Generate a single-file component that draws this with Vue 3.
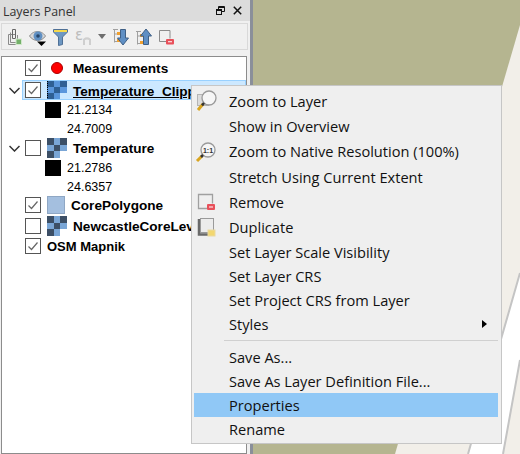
<script setup>
const rows = [
  { type: 'layer', name: 'Measurements', checked: true, icon: 'dot', cls: 'gap' },
  { type: 'layer', name: 'Temperature_Clipped', checked: true, icon: 'raster', open: true, selected: true },
  { type: 'value', text: '21.2134', swatch: true },
  { type: 'value', text: '24.7009' },
  { type: 'layer', name: 'Temperature', checked: false, icon: 'raster', open: true },
  { type: 'value', text: '21.2786', swatch: true },
  { type: 'value', text: '24.6357' },
  { type: 'layer', name: 'CorePolygone', checked: true, icon: 'poly', cls: 'short' },
  { type: 'layer', name: 'NewcastleCoreLevel', checked: false, icon: 'raster' },
  { type: 'layer', name: 'OSM Mapnik', checked: true }
]

// 3x3 raster thumbnail, 0 dark / 1 mid / 2 empty
const cells = [0, 1, 0, 1, 0, 1, 0, 1, 2]

const menu = [
  { label: 'Zoom to Layer', icon: 'zoom', tall: true },
  { label: 'Show in Overview', tall: true },
  { label: 'Zoom to Native Resolution (100%)', icon: 'native', tall: true },
  { label: 'Stretch Using Current Extent', tall: true },
  { label: 'Remove', icon: 'remove', tall: true },
  { label: 'Duplicate', icon: 'duplicate', tall: true },
  { label: 'Set Layer Scale Visibility' },
  { label: 'Set Layer CRS' },
  { label: 'Set Project CRS from Layer' },
  { label: 'Styles', sub: true },
  { sep: true },
  { label: 'Save As...' },
  { label: 'Save As Layer Definition File...' },
  { label: 'Properties', active: true },
  { label: 'Rename' }
]
</script>

<template>
  <div class="app">
    <aside class="panel">
      <header class="title">
        <span class="title-text">Layers Panel</span>
        <span class="title-btns">
          <svg width="9" height="9" viewBox="0 0 9 9" fill="none" stroke="#111"><rect x=".5" y="3.500" width="5" height="5"/><path d="M2.500 3V.5h6v5H6M2.500 1.500h6M.5 4.500h5"/></svg>
          <svg width="9" height="9" viewBox="0 0 9 9" fill="none" stroke="#111" stroke-width="1.500"><path d="M.8 .8l7.400 7.400M8.200 .8L.8 8.200"/></svg>
        </span>
      </header>

      <div class="toolbar">
        <svg width="15" height="18" viewBox="0 0 15 18" fill="none" stroke="#8a8a8a">
          <path d="M1.500 6.500h7M1.500 6.500v10h8"/>
          <path d="M3.500 4.500v10h7V7"/>
          <path d="M5.500 1.500h3v9h-3z" stroke="#666"/>
          <rect x="9" y="11" width="5.500" height="5.500" fill="#74b06a" stroke="#d2e8cc"/>
        </svg>
        <svg width="17" height="18" viewBox="0 0 17 18">
          <path d="M.5 8C3 4.500 6 3.500 8.500 3.500S14 4.500 16.500 8c-2 3-5 4.500-8 4.500S2.500 11 .5 8z" fill="#d8d8d8" stroke="#8b8b8b"/>
          <circle cx="9" cy="8" r="4.500" fill="#5f8fc2"/>
          <circle cx="9" cy="8" r="1.800" fill="#27466a"/>
          <path d="M8 13.500h9l-4.500 4.500z" fill="#000"/>
        </svg>
        <svg width="15" height="18" viewBox="0 0 15 18">
          <path d="M.5 1.500h14v2.500L9.500 9v7.500l-4 1V9L.5 4z" fill="#6d97c2" stroke="#4f7096"/>
          <rect x="1" y="2" width="13" height="2" fill="#f5d94c"/>
        </svg>
        <svg class="eps-icon" width="16" height="18" viewBox="0 0 16 18">
          <text x="0" y="12" class="eps">ε</text>
          <path d="M9 11v6M15 11v6M9 11.500c2-1.500 4-1.500 6 0" fill="none" stroke="#cfcfcf" stroke-width="2"/>
        </svg>
        <span class="caret"></span>
        <svg width="16" height="18" viewBox="0 0 16 18">
          <path d="M0 1.500h5M1.500 1.500v13M1.500 6h3M1.500 13.500h3" stroke="#a0a0a0" fill="none"/>
          <rect x="4" y="4" width="3" height="3" fill="#f0a030"/>
          <rect x="4" y="11" width="3" height="3" fill="#f0a030"/>
          <path d="M7.500 1.500h5v8.500h3L10 17 4.500 10h3z" fill="#5f8fc4" stroke="#3e5f85"/>
        </svg>
        <svg width="16" height="18" viewBox="0 0 16 18">
          <path d="M0 3.500h5M1.500 3.500v13M1.500 8h3M1.500 15.500h3" stroke="#a0a0a0" fill="none"/>
          <rect x="4" y="6" width="3" height="3" fill="#f0a030"/>
          <rect x="4" y="13" width="3" height="3" fill="#f0a030"/>
          <path d="M7.500 16.500h5V8h3L10 1 4.500 8h3z" fill="#5f8fc4" stroke="#3e5f85"/>
        </svg>
        <svg width="15" height="18" viewBox="0 0 15 18" fill="none">
          <path d="M7 13.500H.5V2.500h10.500v8" stroke="#8c8c8c"/>
          <rect x="7" y="11" width="8" height="5.500" rx="1" fill="#e8505a"/>
          <path d="M9 13.750h4" stroke="#fff"/>
        </svg>
      </div>

      <div class="tree">
        <div v-for="r in rows" :key="r.name || r.text" class="row" :class="[r.cls, { value: r.type === 'value', selected: r.selected }]">
          <template v-if="r.type === 'layer'">
            <span class="arrow">
              <svg v-if="r.open" width="11" height="7" viewBox="0 0 11 7" fill="none" stroke="#333" stroke-width="1.500"><path d="M.5 1l5 5 5-5"/></svg>
            </span>
            <span class="check">
              <svg v-if="r.checked" width="14" height="14" viewBox="0 0 14 14" fill="none" stroke="#666" stroke-width="1.200"><path d="M2.500 7.500L5.500 10.500 11.500 3.500"/></svg>
            </span>
            <span class="label-wrap" :class="{ focus: r.selected }">
              <span v-if="r.icon === 'dot'" class="icon"><span class="dot"></span></span>
              <span v-else-if="r.icon === 'raster'" class="icon raster">
                <i v-for="(c, idx) in cells" :key="idx" :class="'c' + c"></i>
              </span>
              <span v-else-if="r.icon === 'poly'" class="icon poly"></span>
              <span class="name" :class="{ plain: !r.icon, under: r.selected }">{{ r.name }}</span>
            </span>
          </template>
          <template v-else>
            <span class="swatch" :class="{ on: r.swatch }"></span>
            <span class="val">{{ r.text }}</span>
          </template>
        </div>
      </div>
    </aside>

    <main class="map">
      <svg class="map-art" width="267" height="454" viewBox="0 0 267 454">
        <path d="M0 0H267V25L142 454H0z" fill="#b5b590"/>
        <path d="M215 454L267 273V360L250 454z" fill="#fff"/>
        <path d="M215 454L267 273M250 454L267 360" stroke="#c4c4c4" stroke-width="2" fill="none"/>
      </svg>
    </main>

    <ul class="menu">
      <template v-for="m in menu" :key="m.label || 'sep'">
        <li v-if="m.sep" class="sep"></li>
        <li v-else class="item" :class="{ tall: m.tall, active: m.active }">
          <span class="mi">
            <svg v-if="m.icon === 'zoom'" width="24" height="24" viewBox="0 0 24 24">
              <rect x="2.500" y="4.500" width="11" height="11" fill="#dcdcdc" stroke="#b5b5b5"/>
              <circle cx="14" cy="8" r="7" fill="#f6f6f6" stroke="#9a9a9a" stroke-width="1.300"/>
              <path d="M8 14L3 20" stroke="#d9a520" stroke-width="3"/>
              <path d="M9 13l-2 2.400" stroke="#333" stroke-width="2.500"/>
            </svg>
            <svg v-else-if="m.icon === 'native'" width="24" height="24" viewBox="0 0 24 24">
              <circle cx="13" cy="10" r="7" fill="#f6f6f6" stroke="#9a9a9a" stroke-width="1.300"/>
              <path d="M7 16L2 21" stroke="#d9a520" stroke-width="3"/>
              <path d="M8 15l-2 2" stroke="#333" stroke-width="2.500"/>
              <text x="13" y="13" text-anchor="middle" class="one">1:1</text>
            </svg>
            <svg v-else-if="m.icon === 'remove'" width="24" height="24" viewBox="0 0 24 24" fill="none">
              <path d="M12 17.500H3.500V3.500h14v9" stroke="#a0a0a0" stroke-width="1.300"/>
              <rect x="12" y="13" width="8" height="6" rx="1" fill="#e8505a"/>
              <path d="M14 16h4" stroke="#fff"/>
            </svg>
            <svg v-else-if="m.icon === 'duplicate'" width="24" height="24" viewBox="0 0 24 24">
              <path d="M4 3v15.500h14" fill="none" stroke="#6a6a6a" stroke-width="2.500"/>
              <rect x="5.500" y="2.500" width="13" height="14" fill="#ececec" stroke="#9a9a9a"/>
              <rect x="13" y="14" width="7" height="6" fill="#f2d770" stroke="#ead9a0"/>
            </svg>
          </span>
          <span class="mt">{{ m.label }}</span>
          <span v-if="m.sub" class="sub"></span>
        </li>
      </template>
    </ul>
  </div>
</template>

<style scoped>
.app {
  position: relative;
  display: flex;
  width: 520px;
  height: 454px;
  overflow: hidden;
  background: #f2efe9;
  font-family: "Open Sans", sans-serif;
}
.panel {
  width: 250px;
  flex: none;
  display: flex;
  flex-direction: column;
  background: #f0f0f0;
  border-right: 3px solid #8a8f9a;
  box-sizing: content-box;
}
.title {
  height: 21px;
  background: #dcdcdc;
  display: flex;
  align-items: center;
  justify-content: space-between;
  padding: 0 8px 0 3px;
  font-size: 12.400px;
  color: #333;
}
.title-text { padding-top: 2px; }
.title-btns { display: flex; gap: 8px; }
.toolbar {
  height: 25px;
  margin: 2px 2px 6px 1px;
  border: 1px solid #d9d9d9;
  display: flex;
  align-items: center;
  padding-left: 5px;
  gap: 7px;
}
.toolbar svg { flex: none; }
.eps-icon { overflow: visible; }
.eps { font: 400 15px "DejaVu Sans", sans-serif; fill: #bdbdbd; }
.caret {
  width: 0; height: 0; flex: none;
  border-left: 4.500px solid transparent;
  border-right: 4.500px solid transparent;
  border-top: 5px solid #6e6e6e;
}
.tree {
  flex: 1;
  margin: 0 3px 0 1px;
  border: 1px solid #8c8c8c;
  background: #fff;
  padding-top: 1px;
  font-family: "Liberation Sans", sans-serif;
  font-size: 12.500px;
  color: #000;
}
.row {
  height: 20px;
  display: flex;
  align-items: center;
}
.row.gap { margin-bottom: 2px; }
.row.short { height: 18px; margin-bottom: 2px; }
.row.value { height: 19px; padding-left: 43px; }
.selected {
  background: #cce8ff;
  outline: 1px solid #99d1ff;
  outline-offset: -1px;
  margin-left: 20px;
}
.selected .arrow { margin-left: -20px; }
.arrow { width: 23px; display: flex; justify-content: center; flex: none; padding-left: 2px; box-sizing: border-box; }
.check {
  width: 16px; height: 16px; flex: none;
  border: 1px solid #555; background: #fff;
  display: flex; align-items: center; justify-content: center;
  box-sizing: border-box;
}
.label-wrap { display: flex; align-items: center; flex: 1; height: 100%; margin-left: 6px; min-width: 0; }
.focus { outline: 1px dotted #000; outline-offset: -1px; }
.icon { width: 20px; height: 20px; flex: none; display: flex; align-items: center; justify-content: center; }
.dot { width: 10px; height: 10px; border-radius: 50%; background: #f00; border: 1px solid #a00; }
.raster { display: grid; grid-template-columns: repeat(3, 1fr); grid-template-rows: repeat(3, 1fr); }
.raster i { display: block; width: 100%; height: 100%; }
.c0 { background: #3c4f66; }
.c1 { background: #7aa6d6; }
.selected .c0 { background: #2f5f94; }
.selected .c1 { background: #5a96dc; }
.poly { width: 18px; height: 18px; background: #a4bfdf; border: 1px solid #8fa7c4; box-sizing: border-box; }
.name { font-weight: 700; margin-left: 6px; white-space: nowrap; font-size: 13.600px; }
.name.plain { margin-left: 0; font-size: 13px; }
.name.under { text-decoration: underline; padding-top: 2px; }
.swatch { width: 16px; height: 16px; flex: none; }
.swatch.on { background: #000; }
.val { margin-left: 6px; }

.map { flex: 1; min-width: 0; position: relative; }
.map-art { position: absolute; left: 0; top: 0; }

.menu {
  position: absolute;
  left: 191px;
  top: 85px;
  width: 311px;
  height: 359px;
  box-sizing: border-box;
  margin: 0;
  padding: 3px 3px 0 2px;
  list-style: none;
  background: #efefef;
  border: 1px solid #c6c6c6;
  font-size: 14.600px;
  color: #111;
}
.item { height: 24px; display: flex; align-items: center; position: relative; }
.item.tall { height: 25.330px; }
.item.active { background: #90c8f6; }
.mi { width: 29px; flex: none; padding-left: 1px; box-sizing: border-box; display: flex; }
.mt { margin-left: 6px; white-space: nowrap; padding-bottom: 2px; }
.sep { height: 8px; display: flex; align-items: flex-start; }
.sep::after { content: ''; display: block; height: 1px; background: #d0d0d0; margin: 3px 0 0 30px; flex: 1; }
.sep ~ .item .mt { padding-bottom: 0; }
.sub {
  position: absolute; right: 11px; top: 7px;
  border-left: 5px solid #000;
  border-top: 4px solid transparent;
  border-bottom: 4px solid transparent;
}
.one { font: 700 7px "Liberation Sans", sans-serif; fill: #333; }
</style>
